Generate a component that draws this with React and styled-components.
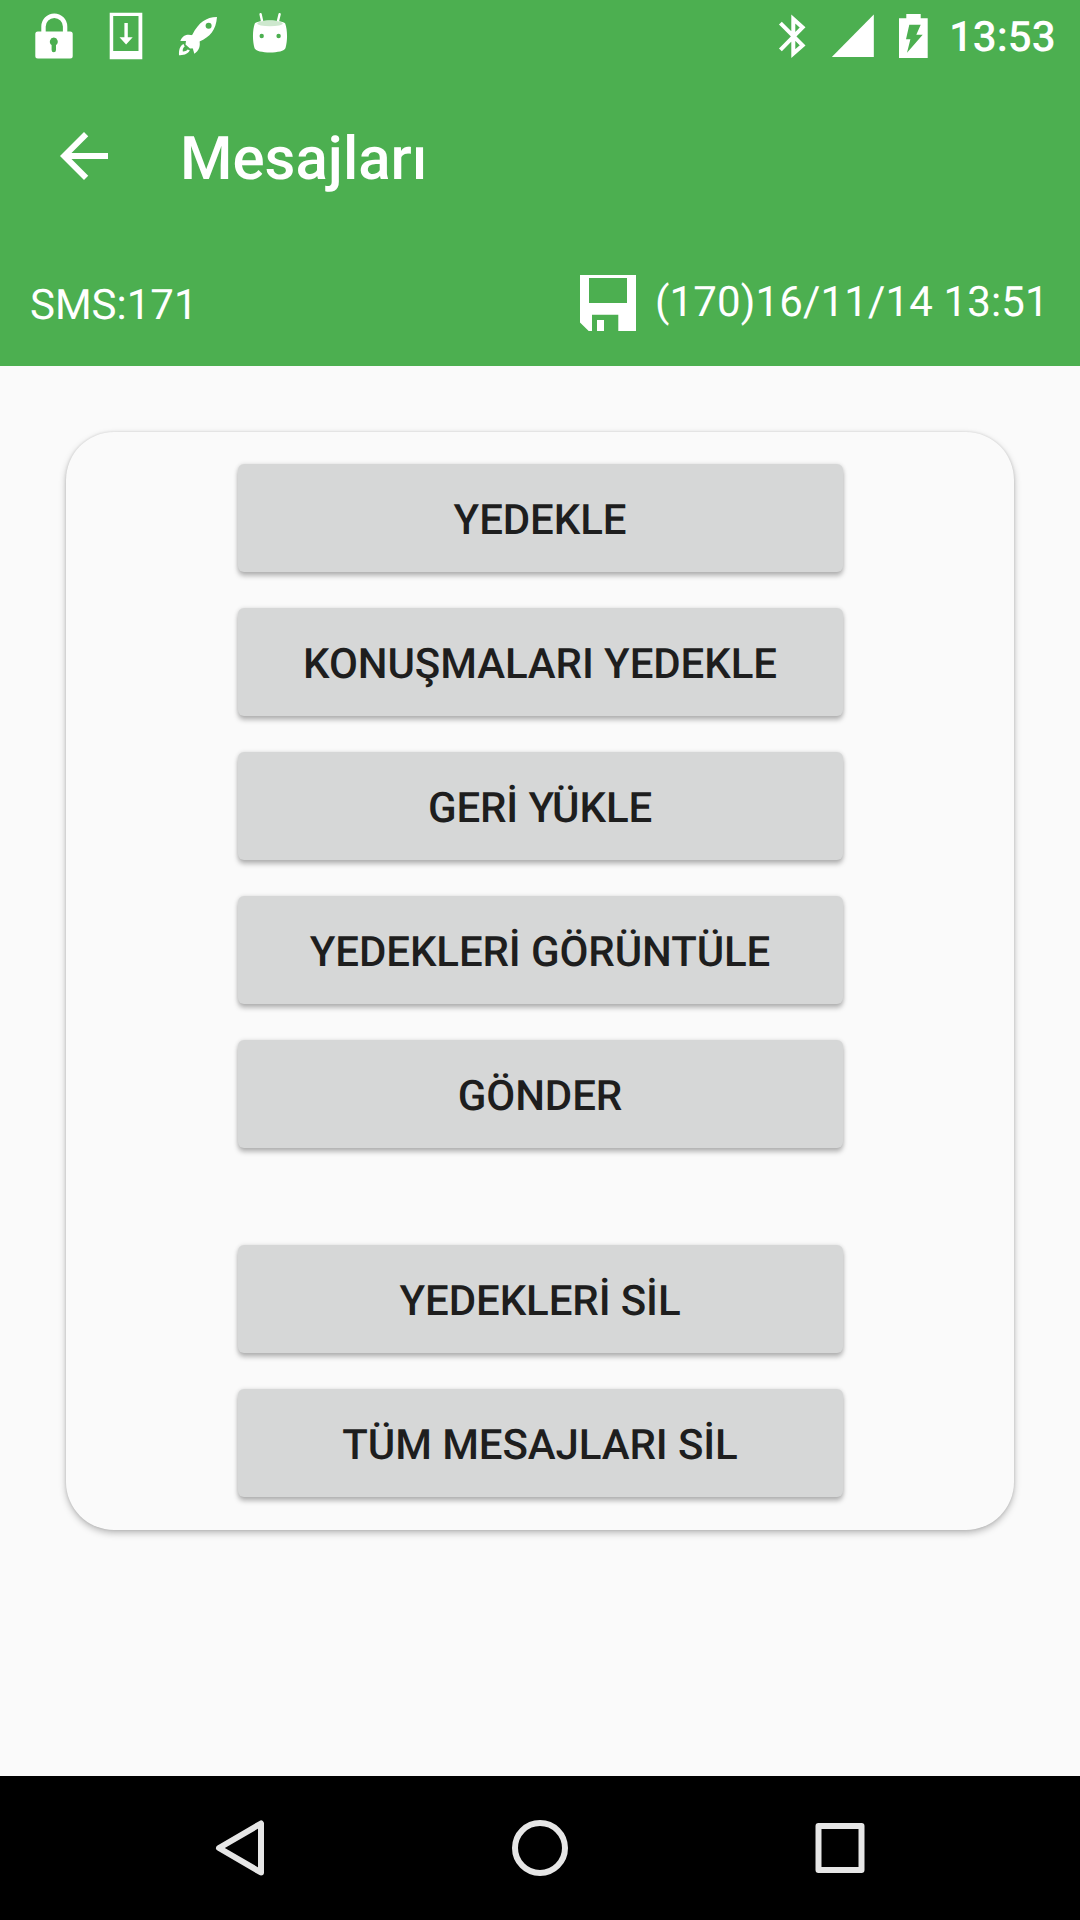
import React from 'react';
import styled, { createGlobalStyle } from 'styled-components';

const GlobalStyle = createGlobalStyle`
  * {
    box-sizing: border-box;
  }

  body {
    margin: 0;
    background: #fafafa;
    font-family: Roboto, 'Noto Sans', sans-serif;
    text-rendering: geometricPrecision;
  }
`;

const Screen = styled.div`
  display: flex;
  flex-direction: column;
  width: 1080px;
  height: 1920px;
  background: #fafafa;
`;

const Header = styled.header`
  height: 366px;
  background: #4caf50;
  color: #fff;
`;

const StatusBar = styled.div`
  display: flex;
  align-items: center;
  justify-content: space-between;
  height: 72px;
  padding: 0 26px 0 30px;
`;

const StatusGroup = styled.div`
  display: flex;
  align-items: center;
  gap: ${(props) => props.$gap}px;
`;

const StatusIcon = styled.svg`
  display: block;
  width: 48px;
  height: 72px;
  fill: #fff;
`;

const Clock = styled.span`
  width: 105px;
  margin-left: 1px;
  padding-top: 4px;
  font-size: 42px;
  font-weight: 500;
  line-height: 50px;
  text-align: right;
`;

const Toolbar = styled.div`
  display: flex;
  align-items: center;
  height: 168px;
  padding-left: 48px;
`;

const BackButton = styled.button`
  width: 72px;
  height: 72px;
  padding: 0;
  border: 0;
  background: none;

  svg {
    display: block;
    fill: #fff;
  }
`;

const Title = styled.h1`
  margin: 0 0 0 60px;
  padding-top: 6px;
  font-size: 60px;
  font-weight: 500;
  line-height: 70px;
`;

const InfoRow = styled.div`
  display: flex;
  justify-content: space-between;
  height: 126px;
  padding: 35px 30px 0 30px;
  font-size: 42px;
  line-height: 50px;
`;

const SmsCount = styled.span`
  padding-top: 6px;
`;

const LastBackup = styled.div`
  display: flex;
  align-items: flex-start;
  width: 470px;
  gap: 19px;

  svg {
    display: block;
    flex: none;
    fill: #fff;
  }
`;

const BackupDate = styled.span`
  padding-top: 3px;
  letter-spacing: 0.14px;
  white-space: nowrap;
`;

const Content = styled.main`
  flex: 1;
  padding: 66px 66px 0;
`;

const Card = styled.section`
  display: flex;
  flex-direction: column;
  align-items: center;
  gap: 36px;
  height: 1098px;
  padding-top: 32px;
  border-radius: 48px;
  background: #fafafa;
  box-shadow: 0 3px 7px rgba(0, 0, 0, 0.26), 0 0 3px rgba(0, 0, 0, 0.12);
`;

const ActionButton = styled.button`
  width: 605px;
  height: 108px;
  margin-top: ${(props) => (props.$separated ? '61px' : '0')};
  padding: 4px 0 0;
  border: 0;
  border-radius: 6px;
  background: #d6d7d7;
  box-shadow: 0 4px 5px rgba(0, 0, 0, 0.26), 0 0 4px rgba(0, 0, 0, 0.12);
  color: #1e1e1e;
  font-family: inherit;
  font-size: 42px;
  font-weight: 500;
  letter-spacing: -0.1px;
  text-rendering: inherit;
`;

const NavBar = styled.nav`
  display: flex;
  align-items: center;
  justify-content: center;
  gap: 228px;
  height: 144px;
  background: #000;
`;

const NavIcon = styled.svg`
  display: block;
  width: 72px;
  height: 72px;
  fill: none;
  stroke: #e6e6e6;
  stroke-width: 6;
  stroke-linejoin: round;
`;

const actions = [
  { label: 'YEDEKLE' },
  { label: 'KONUŞMALARI YEDEKLE' },
  { label: 'GERİ YÜKLE' },
  { label: 'YEDEKLERİ GÖRÜNTÜLE' },
  { label: 'GÖNDER' },
  { label: 'YEDEKLERİ SİL', separated: true },
  { label: 'TÜM MESAJLARI SİL' },
];

function LockIcon() {
  return (
    <StatusIcon viewBox="0 0 48 72">
      <path d="M13.5 34V26.5a10.8 10.8 0 0 1 21.6 0V34" fill="none" stroke="#fff" strokeWidth="4.4" />
      <rect x="5.3" y="31.5" width="37.4" height="27" rx="2.5" />
      <path
        d="M23.8 37.5a4.2 4.2 0 0 1 2.2 7.6V50a2.2 2.2 0 0 1-4.4 0v-4.9a4.2 4.2 0 0 1 2.2-7.6z"
        fill="#4caf50"
      />
    </StatusIcon>
  );
}

function DownloadIcon() {
  return (
    <StatusIcon viewBox="0 0 48 72">
      <path fillRule="evenodd" d="M7.7 12.7H40.3V59.3H7.7zM11.2 16V51H36.5V16z" />
      <path d="M22.4 23h3.4v14.3h4.9L24.1 44.6 17.5 37.3h4.9z" />
    </StatusIcon>
  );
}

function RocketIcon() {
  return (
    <StatusIcon viewBox="0 0 48 72">
      <path d="M43 17C32 17.3 25 22 18.3 34.8L12.2 39.5 11.5 44.5 16 48.5 21 48.3 25.5 41.5C36 37 42 30 43 17z" />
      <path d="M18.8 35.5C14 34 9 34.5 6.3 41L13 41z" />
      <path d="M25.5 41C26.5 46 25 51 20.3 53.7L18.7 48z" />
      <path d="M9.5 44C5.8 46 4.8 49.5 5 55.2 10.5 55.5 14.5 53.5 15.8 50.3L13.5 49.6C12.4 51.2 10.5 51.6 8.8 51.5 8.5 49.6 9 47.8 10.7 46.5z" />
      <circle cx="34.6" cy="25.7" r="3" fill="#4caf50" />
    </StatusIcon>
  );
}

function AndroidIcon() {
  return (
    <StatusIcon viewBox="0 0 48 72">
      <path d="M14.6 14.2 16.5 23M33.6 14.2 31.5 23" stroke="#fff" strokeWidth="2.4" strokeLinecap="round" />
      <path d="M8.8 23.5C12 19.5 36 19.5 39.2 23.5 41.6 30 41.6 41 39.5 48 38 54 10 54 8.5 48 6.4 41 6.4 30 8.8 23.5z" />
      <ellipse cx="24" cy="23.4" rx="12.8" ry="2.8" fill="#cde8ce" />
      <circle cx="15.7" cy="36" r="2.2" fill="#4caf50" />
      <circle cx="32.6" cy="36" r="2.2" fill="#4caf50" />
    </StatusIcon>
  );
}

function BluetoothIcon() {
  return (
    <StatusIcon viewBox="0 0 48 72">
      <path
        d="M12.4 23.2 34.6 45.4 25.3 53.6V19L34.6 27.4 12.4 49.8"
        fill="none"
        stroke="#fff"
        strokeWidth="4"
      />
    </StatusIcon>
  );
}

function SignalIcon() {
  return (
    <StatusIcon viewBox="0 0 48 72">
      <path d="M3.8 57H45.8V14.5z" />
    </StatusIcon>
  );
}

function BatteryIcon() {
  return (
    <StatusIcon viewBox="0 0 48 72">
      <path
        fillRule="evenodd"
        d="M18.3 14H32.7V18.3H39.7V58H11V18.3H18.3zM21.3 24.7 18 39.3H22.4L19 52.7 34.7 34.7H28.3L32.7 24.7z"
      />
    </StatusIcon>
  );
}

function FloppyIcon() {
  return (
    <svg width="56" height="56" viewBox="0 0 56 56">
      <path fillRule="evenodd" d="M0 0H56V56H38.3V39.7H12V56H8.7L0 47.5zM9 3V28H47V3z" />
      <rect x="17" y="45" width="7" height="11" />
    </svg>
  );
}

function App() {
  return (
    <>
      <GlobalStyle />
      <Screen>
        <Header>
          <StatusBar>
            <StatusGroup $gap={24}>
              <LockIcon />
              <DownloadIcon />
              <RocketIcon />
              <AndroidIcon />
            </StatusGroup>
            <StatusGroup $gap={12}>
              <BluetoothIcon />
              <SignalIcon />
              <BatteryIcon />
              <Clock>13:53</Clock>
            </StatusGroup>
          </StatusBar>
          <Toolbar>
            <BackButton>
              <svg width="72" height="72" viewBox="0 0 24 24">
                <path d="M20 11H7.83l5.59-5.59L12 4l-8 8 8 8 1.41-1.41L7.83 13H20v-2z" />
              </svg>
            </BackButton>
            <Title>Mesajları</Title>
          </Toolbar>
          <InfoRow>
            <SmsCount>SMS:171</SmsCount>
            <LastBackup>
              <FloppyIcon />
              <BackupDate>(170)16/11/14 13:51</BackupDate>
            </LastBackup>
          </InfoRow>
        </Header>
        <Content>
          <Card>
            {actions.map((action) => (
              <ActionButton key={action.label} $separated={action.separated}>
                {action.label}
              </ActionButton>
            ))}
          </Card>
        </Content>
        <NavBar>
          <NavIcon viewBox="0 0 72 72">
            <path d="M57 11.5V60.5L15 36z" />
          </NavIcon>
          <NavIcon viewBox="0 0 72 72">
            <circle cx="36" cy="36" r="25" />
          </NavIcon>
          <NavIcon viewBox="0 0 72 72">
            <rect x="14.5" y="14" width="43" height="44" />
          </NavIcon>
        </NavBar>
      </Screen>
    </>
  );
}

export default App;
